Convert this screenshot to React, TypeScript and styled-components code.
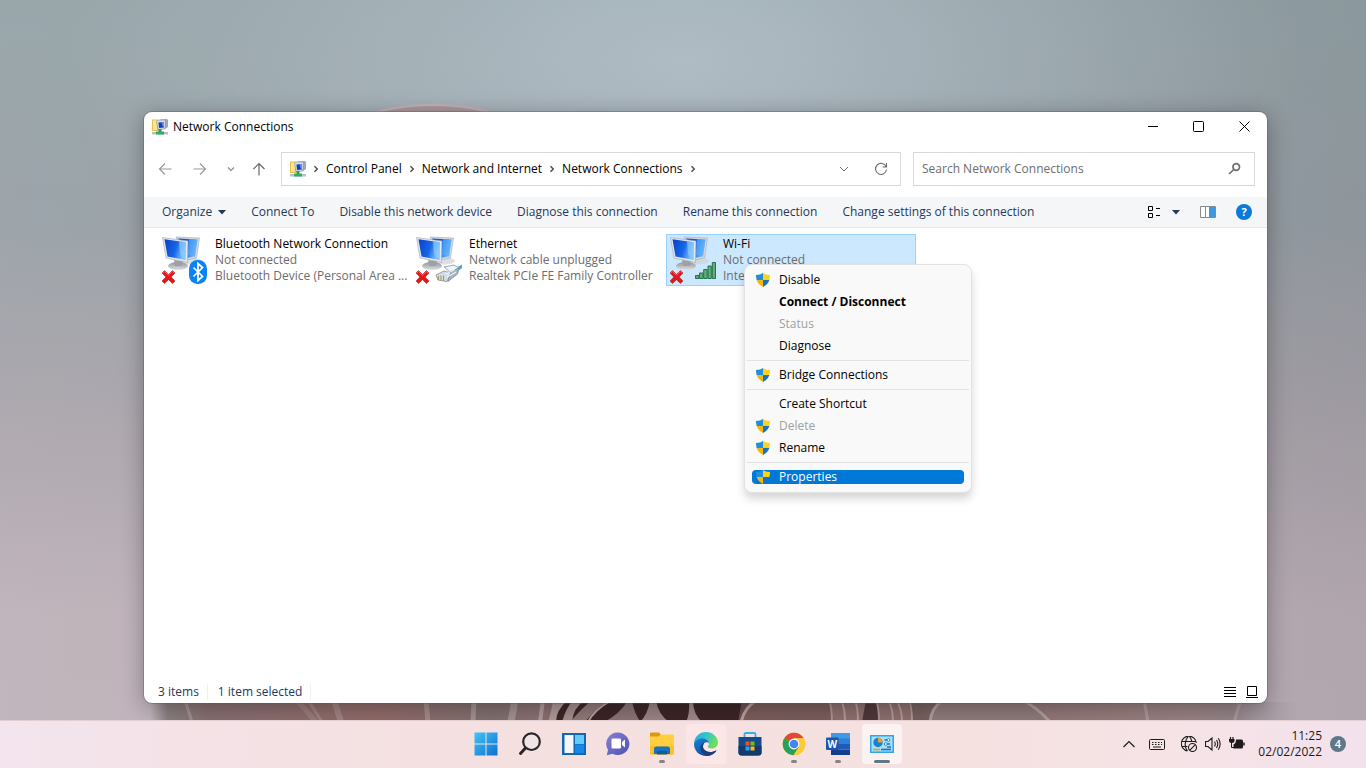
import React from "react";
import styled, { createGlobalStyle } from "styled-components";

const Global = createGlobalStyle`
  *, *::before, *::after { box-sizing: border-box; }
  body { margin: 0; font: 12px/16px "Open Sans", "Noto Sans", sans-serif; color: #000; }
  button { font: inherit; color: inherit; background: none; border: 0; padding: 0; margin: 0; text-align: left; }
  a { color: inherit; text-decoration: none; }
  ul { list-style: none; margin: 0; padding: 0; }
  svg { display: block; flex: none; }
`;

const Desktop = styled.div`
  position: relative;
  min-height: 100vh;
  display: flex;
  flex-direction: column;
  overflow: hidden;
  background:
    radial-gradient(ellipse 620px 300px at 50% 8%, rgba(184, 197, 206, 0.75), rgba(184, 197, 206, 0)),
    linear-gradient(90deg, rgba(255, 255, 255, 0.06), rgba(255, 255, 255, 0) 50%, rgba(70, 70, 80, 0.1)),
    linear-gradient(180deg, #93a2a6 0, #979fa5 30%, #aaa4ab 55%, #bdb0b8 80%, #bdb1b8 100%);
`;

const Wallpaper = styled.svg`
  position: absolute;
  inset: 0;
  width: 100%;
  height: 100%;
`;

const Workspace = styled.main`
  position: relative;
  flex: 1;
  display: flex;
  padding: 112px 99px 17px 144px;
`;

const Window = styled.section`
  flex: 1;
  min-width: 0;
  display: flex;
  flex-direction: column;
  background: #fff;
  border-radius: 8px;
  box-shadow: 0 0 0 1px rgba(90, 90, 95, 0.4), 0 4px 22px rgba(20, 15, 20, 0.36);
`;

const TitleBar = styled.header`
  display: flex;
  align-items: center;
  height: 30px;
  padding-left: 8px;
  gap: 5px;
`;

const Title = styled.h1`
  flex: 1;
  margin: 0;
  font-size: 12px;
  font-weight: 400;
`;

const CaptionButtons = styled.div`
  display: flex;
  align-self: flex-start;
`;

const CaptionButton = styled.button`
  width: 46px;
  height: 28px;
  display: flex;
  align-items: center;
  justify-content: center;
`;

const NavRow = styled.div`
  display: flex;
  align-items: center;
  height: 55px;
  padding: 0 12px 2px 6px;
`;

const NavButton = styled.button<{ $w: number }>`
  width: ${(p) => p.$w}px;
  height: 30px;
  display: flex;
  align-items: center;
  justify-content: center;
`;

const AddressBar = styled.nav`
  flex: 1;
  height: 34px;
  margin: 0 12px 0 4px;
  padding: 0 1px 0 8px;
  border: 1px solid #d9d9d9;
  display: flex;
  align-items: center;
`;

const Crumb = styled.a`
  white-space: nowrap;
`;

const CrumbArrow = styled.svg`
  margin: 0 4px;
`;

const Spacer = styled.div`
  flex: 1;
`;

const SearchBox = styled.label`
  width: 342px;
  height: 34px;
  padding: 0 12px 0 8px;
  border: 1px solid #d9d9d9;
  display: flex;
  align-items: center;
`;

const SearchInput = styled.input`
  flex: 1;
  min-width: 0;
  border: 0;
  padding: 0;
  outline: 0;
  background: none;
  font: inherit;
  &::placeholder { color: #6d6d6d; opacity: 1; }
`;

const CommandBar = styled.div`
  display: flex;
  align-items: center;
  height: 31px;
  padding: 0 15px 0 18px;
  gap: 25px;
  background: #f5f6f8;
  border-bottom: 1px solid #e6e7ea;
  color: #1e395b;
`;

const Command = styled.button`
  display: flex;
  align-items: center;
  gap: 6px;
  white-space: nowrap;
`;

const ViewTools = styled.div<{ $gap: number }>`
  display: flex;
  align-items: center;
  gap: ${(p) => p.$gap}px;
`;

const HelpButton = styled.button`
  width: 16px;
  height: 16px;
  border-radius: 50%;
  background: #0a7bd8;
  color: #fff;
  font-size: 11px;
  font-weight: 700;
  line-height: 16px;
  text-align: center;
`;

const Items = styled.ul`
  flex: 1;
  display: flex;
  align-items: flex-start;
  gap: 4px;
  padding: 6px 14px;
`;

const Item = styled.li`
  position: relative;
  width: 250px;
`;

const Tile = styled.button<{ $selected?: boolean }>`
  width: 100%;
  height: 52px;
  display: flex;
  align-items: center;
  gap: 7px;
  padding-left: 1px;
  border: 1px solid ${(p) => (p.$selected ? "#99d1ff" : "transparent")};
  background: ${(p) => (p.$selected ? "#cce8ff" : "transparent")};
`;

const TileText = styled.span`
  display: flex;
  flex-direction: column;
`;

const TileLine = styled.span<{ $main?: boolean }>`
  color: ${(p) => (p.$main ? "#000" : "#6d6d6d")};
  white-space: nowrap;
`;

const Menu = styled.div`
  position: absolute;
  z-index: 2;
  left: 78px;
  top: 30px;
  width: 228px;
  padding: 4px 2px;
  background: #f9f9f9;
  border: 1px solid #e2e2e2;
  border-radius: 8px;
  box-shadow: 0 6px 9px rgba(0, 0, 0, 0.16);
`;

const MenuRow = styled.button<{ $bold?: boolean }>`
  width: 100%;
  height: 22px;
  padding: 0 5px;
  display: flex;
  align-items: center;
  font-weight: ${(p) => (p.$bold ? 700 : 400)};
  &:disabled { color: #a0a0a0; }
`;

const MenuLabel = styled.span<{ $hot?: boolean }>`
  flex: 1;
  height: 14px;
  line-height: 14px;
  padding-left: 4px;
  display: flex;
  align-items: center;
  gap: 9px;
  border-radius: 4px;
  color: ${(p) => (p.$hot ? "#fff" : "inherit")};
  background: ${(p) => (p.$hot ? "#0078d7" : "transparent")};
`;

const IconSlot = styled.span`
  width: 14px;
  height: 14px;
`;

const Divider = styled.hr`
  height: 1px;
  margin: 3px 0;
  border: 0;
  background: #e2e2e2;
`;

const StatusBar = styled.footer`
  display: flex;
  align-items: center;
  height: 23px;
  padding: 0 9px 0 14px;
  gap: 10px;
  color: #1e395b;
`;

const StatusText = styled.span`
  padding-right: 8px;
  border-right: 1px solid #f0f0f0;
`;

const Taskbar = styled.footer`
  position: relative;
  display: grid;
  grid-template-columns: 1fr auto 1fr;
  align-items: center;
  height: 48px;
  box-shadow: inset 0 1px #e3cfd1;
  background: linear-gradient(90deg, #f3e5ee 0, #f4e2e6 14%, #f4e0df 40%, #f5e1e0 70%, #f5e3e6 86%, #f3e2ec 100%);
`;

const Apps = styled.div`
  grid-column: 2;
  display: flex;
  gap: 4px;
  padding-left: 1px;
`;

const AppButton = styled.button<{ $fill?: string }>`
  position: relative;
  width: 40px;
  height: 40px;
  display: flex;
  align-items: center;
  justify-content: center;
  border-radius: 4px;
  background: ${(p) => p.$fill ?? "transparent"};
`;

const Running = styled.span<{ $active?: boolean }>`
  position: absolute;
  bottom: 1px;
  left: 50%;
  transform: translateX(-50%);
  width: ${(p) => (p.$active ? 16 : 6)}px;
  height: 3px;
  border-radius: 2px;
  background: ${(p) => (p.$active ? "#5f7886" : "#8b8283")};
`;

const Tray = styled.div`
  justify-self: end;
  display: flex;
  align-items: center;
  gap: 8px;
  padding-right: 20px;
  color: #1b1b1b;
`;

const TrayButton = styled.button<{ $gap?: number }>`
  margin-right: ${(p) => p.$gap ?? 0}px;
`;

const Clock = styled.button`
  margin-left: 5px;
  text-align: right;
`;

const Badge = styled.span`
  width: 16px;
  height: 16px;
  border-radius: 50%;
  background: #5f7886;
  color: #fff;
  font-size: 11px;
  font-weight: 600;
  line-height: 16px;
  text-align: center;
`;

/* ---------- wallpaper ---------- */

const ridges: [number, number, number, number][] = [
  [185, 192, 3, 0.4], [297, 316, 5, 0.22], [308, 322, 3, 0.3], [334, 341, 6, 0.3], [426, 428, 5, 0.4],
  [474, 473, 5, 0.45], [515, 511, 7, 0.45], [543, 540, 4, 0.6], [555, 550, 3, 0.6],
];
const pleats: [number, number][] = [[829, 832], [841, 845], [855, 858], [876, 879], [888, 893], [896, 902], [909, 912]];

const Bloom = () => (
  <Wallpaper viewBox="0 0 1366 768" preserveAspectRatio="none" aria-hidden="true">
    <defs>
      <linearGradient id="bloom" x1="150" x2="1300" y1="0" y2="0" gradientUnits="userSpaceOnUse">
        <stop offset="0" stopColor="#8f8587" stopOpacity="0" />
        <stop offset=".015" stopColor="#8b8080" />
        <stop offset=".05" stopColor="#876f6e" />
        <stop offset=".2" stopColor="#916b69" />
        <stop offset=".3" stopColor="#80706f" />
        <stop offset=".34" stopColor="#8c7070" />
        <stop offset=".5" stopColor="#6b4e4d" />
        <stop offset=".67" stopColor="#76605f" />
        <stop offset=".78" stopColor="#927876" />
        <stop offset=".9" stopColor="#9a8280" />
        <stop offset=".94" stopColor="#938487" />
        <stop offset="1" stopColor="#9d949d" stopOpacity="0" />
      </linearGradient>
    </defs>
    <ellipse cx="433" cy="146" rx="104" ry="42" fill="#c2b0b7" />
    <ellipse cx="433" cy="148" rx="98" ry="42" fill="#ab999c" />
    <path d="M150 702H1300V730H150Z" fill="url(#bloom)" />
    {ridges.map(([a, b, w, o]) => (
      <path key={a} d={`M${a} 700L${b} 722`} stroke="#cbb9b8" strokeWidth={w} opacity={o} />
    ))}
    <path d="M565 700H700L742 700L738 722H548Z" fill="#3b2526" />
    <path d="M568 700Q556 710 556 722H548Q552 708 559 700Z" fill="#b09896" />
    <path d="M585 700Q573 708 572 722H562Q566 708 573 700Z" fill="#a58d8b" />
    <path d="M612 700Q594 710 585 722H570Q582 708 592 700Z" fill="#927877" />
    <path d="M612 700Q594 710 588 722" stroke="#bba5a3" strokeWidth="2" fill="none" />
    <path d="M632 700Q634 714 641 722H604Q620 714 628 700Z" fill="#8b7473" />
    <path d="M656 700Q658 714 669 722H640Q648 714 650 700Z" fill="#9a8583" />
    <path d="M693 700Q693 714 702 722H686Q690 714 689 700Z" fill="#a08b89" />
    <path d="M758 700Q745 706 740 722H836L828 700Z" fill="#7a5e5c" />
    <path d="M758 700Q745 706 741 722" stroke="#b8a29f" strokeWidth="3" fill="none" />
    <path d="M830 700H908L912 722H834Z" fill="#8d706d" />
    <path d="M866 700H876L880 722H862Z" fill="#4e3838" />
    {pleats.map(([a, b]) => (
      <path key={a} d={`M${a} 700Q${b} 708 ${b} 722`} stroke="#c2aaa6" strokeWidth="2" opacity=".75" fill="none" />
    ))}
    <path d="M941 700Q931 708 930 722H1050Q1040 706 1020 700Z" fill="#8e7b7b" />
    <path d="M943 700Q931 708 930 722M1022 700Q1038 708 1050 722" stroke="#bca9a8" strokeWidth="3" opacity=".8" fill="none" />
    <path d="M1144 700L1148 722M1241 700L1234 722" stroke="#b5a3a2" strokeWidth="3" opacity=".7" />
  </Wallpaper>
);

/* ---------- small line icons ---------- */

type LineProps = { d: string; w?: number; h?: number; color?: string; sw?: number };
const Line = ({ d, w = 16, h = 16, color = "#7a7a7a", sw = 1 }: LineProps) => (
  <svg width={w} height={h} viewBox={`0 0 ${w} ${h}`} fill="none" stroke={color} strokeWidth={sw} aria-hidden="true">
    <path d={d} />
  </svg>
);

const Arrow = () => (
  <CrumbArrow width="12" height="12" viewBox="0 0 12 12" fill="none" stroke="#4a4a4a" strokeWidth="1.4" aria-hidden="true">
    <path d="M4.5 3.2L7.3 6L4.5 8.8" />
  </CrumbArrow>
);

const Caret = () => (
  <svg width="8" height="5" viewBox="0 0 8 5" aria-hidden="true"><path d="M0 0H8L4 4.5Z" fill="#1e395b" /></svg>
);

const NetFolder = () => (
  <svg width="16" height="16" viewBox="0 0 16 16" aria-hidden="true">
    <path d="M0 .500H5.500L6.500 1.500V12H0Z" fill="#e8c04e" />
    <path d="M1 1.500H5V11H1Z" fill="#fbe48e" />
    <path d="M8 .500L15 0L16 1V8L13 10Z" fill="#9da7ba" />
    <path d="M4.500 2.500L6 1H13.500L13 10L6 10.500Z" fill="#d6dbe5" stroke="#7f8ba3" strokeWidth=".6" />
    <path d="M6.500 3.500L12 3V8.500L7 9Z" fill="#173fb8" />
    <path d="M9.500 3.200L12 3V8.500L10.500 7Z" fill="#5a97f2" />
    <path d="M6.500 10H9.500V13H6.500Z" fill="#2a9d58" />
    <path d="M0 13H16V15.500H0Z" fill="#b9c0c6" />
    <path d="M4 12.500H12V15.500H4Z" fill="#2fae63" />
  </svg>
);

const Shield = () => (
  <svg width="14" height="14" viewBox="0 0 14 14" aria-hidden="true">
    <defs><clipPath id="shield"><path d="M7 0Q9.500 1.800 14 2Q14.300 10.500 7 14Q-.3 10.500 0 2Q4.500 1.800 7 0Z" /></clipPath></defs>
    <g clipPath="url(#shield)">
      <path d="M0 0H7V7H0Z" fill="#1d8fdd" />
      <path d="M7 0H14V7H7Z" fill="#ffd21a" />
      <path d="M0 7H7V14H0Z" fill="#f6b60d" />
      <path d="M7 7H14V14H7Z" fill="#1673c4" />
    </g>
  </svg>
);

/* ---------- connection icons ---------- */

const Monitors = ({ children }: { children: React.ReactNode }) => (
  <svg width="48" height="48" viewBox="0 0 48 48" aria-hidden="true">
    <defs>
      <linearGradient id="scr" x1="0" y1="0" x2="1" y2="0.3">
        <stop offset="0" stopColor="#0a3fc4" /><stop offset=".6" stopColor="#1667e8" /><stop offset="1" stopColor="#7cc2ff" />
      </linearGradient>
      <linearGradient id="stand" x1="0" y1="0" x2="0" y2="1">
        <stop offset="0" stopColor="#8f9299" /><stop offset="1" stopColor="#dfe1e4" />
      </linearGradient>
    </defs>
    <ellipse cx="30" cy="25" rx="11" ry="3.500" fill="#cfd1d5" opacity=".7" />
    <path d="M16 1L39.500 2L36.500 22L26 24Z" fill="#d5d9df" stroke="#a4a9b1" strokeWidth=".6" />
    <path d="M18 2.500L37.500 3.500L35 20.500L26 22Z" fill="url(#scr)" />
    <path d="M29 3L37.500 3.500L35 20.500L28 19Z" fill="#58acfa" opacity=".7" />
    <ellipse cx="18" cy="30" rx="10" ry="4" fill="url(#stand)" />
    <path d="M14 24L23 25L22 30H15Z" fill="#9da0a6" />
    <path d="M2.500 1.500L28 5L27.500 26.500L6 22Z" fill="#e4e7eb" stroke="#9fa5ae" strokeWidth=".6" />
    <path d="M4.500 3.300L26 6.300L25.500 24L7.500 20.500Z" fill="url(#scr)" />
    <path d="M19 5.300L26 6.300L25.500 24L20 18Z" fill="#8fccff" opacity=".65" />
    {children}
    <path d="M2 37L4.500 34.500L8.500 38.500L12.500 34.500L15 37L11.200 41L15 45L12.500 47.500L8.500 43.700L4.500 47.500L2 45L5.800 41Z" fill="#e0171b" stroke="#b01013" strokeWidth=".5" strokeLinejoin="round" />
    <path d="M3 37L4.500 35.500L8.500 39.500L12.500 35.500L14 37" fill="none" stroke="#f56b6b" strokeWidth=".8" />
  </svg>
);

const BluetoothMark = () => (
  <>
    <rect x="29" y="24" width="18" height="24" rx="8.500" fill="#0a84f5" />
    <path d="M33.500 31.500L42.500 40.500L38 44.500V27.500L42.500 31.500L33.500 40.500" fill="none" stroke="#fff" strokeWidth="1.700" />
  </>
);

const PlugMark = () => (
  <>
    <path d="M40 33L48 28.500L49 31.500L42 36Z" fill="#4aa6e0" />
    <path d="M30 31L40 29L45 32L36 36Z" fill="#eef3f7" stroke="#8694a1" strokeWidth=".8" />
    <path d="M36 36L45 32L43.500 38L34 45.500Z" fill="#a6b6c3" stroke="#7b8c9b" strokeWidth=".8" />
    <path d="M22 39L30 35L37 37L33 45.500L24 44Z" fill="#d3dde4" stroke="#7b8c9b" strokeWidth=".8" />
    <path d="M24.500 40V44M27 39.500V44.500M29.500 39.500V45" stroke="#a99554" strokeWidth="1" />
    <path d="M32 38L41 33.500M33 41L42 36" stroke="#fff" strokeWidth="1" />
  </>
);

const SignalMark = () => (
  <g fill="#5fae7c" stroke="#27714a" strokeWidth="1">
    <path d="M27.500 39.500H31V42.500H27.500Z" />
    <path d="M31.500 37H35V42.500H31.500Z" />
    <path d="M35.700 33.500H39.200V42.500H35.700Z" />
    <path d="M40 30H43.300V42.500H40Z" />
    <path d="M44.300 26.500H47.500V42.500H44.300Z" />
  </g>
);

/* ---------- taskbar icons ---------- */

const Svg24 = ({ children }: { children: React.ReactNode }) => (
  <svg width="24" height="24" viewBox="0 0 24 24" aria-hidden="true">{children}</svg>
);

const StartIcon = () => (
  <Svg24>
    <defs><linearGradient id="win" x1="0" y1="0" x2="24" y2="24" gradientUnits="userSpaceOnUse"><stop stopColor="#43c6f8" /><stop offset="1" stopColor="#0a6fd0" /></linearGradient></defs>
    <path d="M.500 .500H11.500V11.500H.500ZM12.500 .500H23.500V11.500H12.500ZM.500 12.500H11.500V23.500H.500ZM12.500 12.500H23.500V23.500H12.500Z" fill="url(#win)" />
  </Svg24>
);
const SearchIcon = () => (
  <Svg24>
    <circle cx="13.500" cy="9.700" r="8.300" fill="#efe4e6" stroke="#2a2526" strokeWidth="2.200" />
    <path d="M7.500 16L2.500 21.500" stroke="#2a2526" strokeWidth="3" strokeLinecap="round" />
  </Svg24>
);
const WidgetsIcon = () => (
  <Svg24>
    <path d="M0 1H24V23H0Z" fill="#1267b5" />
    <path d="M2.500 3H11.500V21H2.500Z" fill="#f4f6f9" />
    <path d="M13 3H22V12H13Z" fill="#62cbfb" />
    <path d="M13 12.500H22V21H13Z" fill="#1688e8" />
  </Svg24>
);
const ChatIcon = () => (
  <Svg24>
    <defs><linearGradient id="chat" x1="0" y1="0" x2="1" y2="1"><stop stopColor="#8a80cf" /><stop offset="1" stopColor="#4a52b8" /></linearGradient></defs>
    <path d="M12 .5A11.500 11.300 0 1 1 6.500 21.800L.8 23.200L2 17.800A11.500 11.300 0 0 1 12 .5Z" fill="url(#chat)" />
    <rect x="5.500" y="6.500" width="9.500" height="10" rx="1.200" fill="#fff" />
    <path d="M16 10L19 7.500V15.500L16 13Z" fill="#fff" />
  </Svg24>
);
const FilesIcon = () => (
  <Svg24>
    <path d="M0 1.500Q0 .5 1 .5H9L11 3V6H0Z" fill="#d99a0b" />
    <path d="M0 4.500H8.500L11 2.500H23Q24 2.500 24 3.500V21.500Q24 22.500 23 22.500H1Q0 22.500 0 21.500Z" fill="#ffcf3f" />
    <path d="M0 14H24V21.500Q24 22.500 23 22.500H1Q0 22.500 0 21.500Z" fill="#fbc02b" />
    <path d="M4 22V17Q4 14.500 6.500 14.500H17.500Q20 14.500 20 17V22Z" fill="#1673c2" />
    <path d="M7 19H17V22.500H7Z" fill="#0e5b9f" />
  </Svg24>
);
const EdgeIcon = () => (
  <Svg24>
    <defs>
      <linearGradient id="edgeTop" x1="0" y1="0" x2="1" y2=".4"><stop stopColor="#2aa8dd" /><stop offset=".5" stopColor="#30c3cf" /><stop offset="1" stopColor="#6be05c" /></linearGradient>
      <linearGradient id="edgeLow" x1="0" y1="0" x2=".6" y2="1"><stop stopColor="#1782d5" /><stop offset="1" stopColor="#0e4f9e" /></linearGradient>
    </defs>
    <path d="M0 11.500C.500 4.500 5.500 0 12 0S24 5 24 10.500C24 14 21.500 16.500 18 16.500C15.500 16.500 13.800 15.800 13.800 14.800C13.800 14 15 13.500 15 11.500C15 9 12.500 7 9 7C5 7 1 8.500 0 11.500Z" fill="url(#edgeTop)" />
    <path d="M0 12C0 9 4 6.500 8.500 6.500C12.500 6.500 15 9 15 11.500C14 9.800 9.500 9.500 9 14C8.700 18 13 21.500 19.500 19.500C21 19 22.300 18.200 22.500 18.500C20.500 22 16.500 24 12 24C5.500 24 0 19 0 12Z" fill="url(#edgeLow)" />
    <path d="M7.500 12.500C4.500 17 8 23 14 23.700C17.500 23.300 21 21.500 22.500 18.500C22 18.300 21 19.200 19 19.700C13 21 8.500 17.500 9 14C9.200 12 10 11 11 10.500Q8.500 10.800 7.500 12.500Z" fill="#1b3f78" />
  </Svg24>
);
const StoreIcon = () => (
  <Svg24>
    <path d="M6.500 6V2.500Q6.500 1 8 1H16Q17.500 1 17.500 2.500V6" fill="none" stroke="#30b0ec" strokeWidth="1.800" />
    <path d="M.500 5H23.500V20.500Q23.500 23.500 20.500 23.500H3.500Q.500 23.500 .500 20.500Z" fill="#174b88" />
    <path d="M.500 14H23.500V20.500Q23.500 23.500 20.500 23.500H3.500Q.500 23.500 .500 20.500Z" fill="#123a6e" />
    <path d="M7.500 9.500H11.500V13.500H7.500Z" fill="#f0512a" /><path d="M12.500 9.500H16.500V13.500H12.500Z" fill="#7dba1c" />
    <path d="M7.500 14.500H11.500V18.500H7.500Z" fill="#23a5ec" /><path d="M12.500 14.500H16.500V18.500H12.500Z" fill="#fdb813" />
  </Svg24>
);
const ChromeIcon = () => (
  <Svg24>
    <circle cx="12" cy="12" r="11.300" fill="#fbc833" />
    <path d="M12 12L2.200 6.350A11.300 11.300 0 0 1 21.800 6.350H12Z" fill="#e0483c" />
    <path d="M12 12L2.200 6.350A11.300 11.300 0 0 0 11.500 23.300L17 14.900Z" fill="#25a15a" />
    <path d="M12 6.350H21.800A11.300 11.300 0 0 1 11.500 23.300L17 14.900Z" fill="#fbcb3c" />
    <circle cx="12" cy="12" r="5.400" fill="#fff" />
    <circle cx="12" cy="12" r="4.300" fill="#4285f4" />
  </Svg24>
);
const WordMark = styled.text`
  font: 700 10px "Open Sans", sans-serif;
  fill: #fff;
`;
const WordIcon = () => (
  <Svg24>
    <path d="M5 1H24V7H5Z" fill="#3f9be8" /><path d="M5 6.500H24V12H5Z" fill="#2f7fd6" />
    <path d="M5 12H24V17.500H5Z" fill="#1f5cba" /><path d="M5 17.500H24V23H5Z" fill="#153f8e" />
    <rect x="0" y="5.500" width="12.500" height="12.500" rx="1" fill="#1a55b0" />
    <WordMark x="6.300" y="15.500" textAnchor="middle">W</WordMark>
  </Svg24>
);
const ControlPanelIcon = () => (
  <Svg24>
    <path d="M0 3H24V21H0Z" fill="#36a4e3" />
    <path d="M1.500 4.500H22.500V19.500H1.500Z" fill="#a2e0fb" />
    <circle cx="8" cy="10.500" r="4.700" fill="#1782cf" />
    <path d="M8 10.500V5.800A4.700 4.700 0 0 1 12.700 10.500Z" fill="#f59b23" />
    <path d="M14.500 8H20M14.500 12H20M17 15H21" stroke="#1974c2" strokeWidth="1.300" />
    <circle cx="18.500" cy="8" r="1.400" fill="#fff" stroke="#1974c2" strokeWidth=".8" /><circle cx="15.800" cy="12" r="1.400" fill="#fff" stroke="#1974c2" strokeWidth=".8" />
    <path d="M3 17.500H10" stroke="#f59b23" strokeWidth="1.600" /><path d="M11 17.500H21" stroke="#1974c2" strokeWidth="1.600" />
  </Svg24>
);

/* ---------- data ---------- */

const crumbs = ["Control Panel", "Network and Internet", "Network Connections"];
const commands = ["Connect To", "Disable this network device", "Diagnose this connection", "Rename this connection", "Change settings of this connection"];

type MenuEntry = { label: string; shield?: boolean; bold?: boolean; disabled?: boolean; hot?: boolean } | null;
const menu: MenuEntry[] = [
  { label: "Disable", shield: true },
  { label: "Connect / Disconnect", bold: true },
  { label: "Status", disabled: true },
  { label: "Diagnose" },
  null,
  { label: "Bridge Connections", shield: true },
  null,
  { label: "Create Shortcut" },
  { label: "Delete", shield: true, disabled: true },
  { label: "Rename", shield: true },
  null,
  { label: "Properties", shield: true, hot: true },
];

const connections = [
  { name: "Bluetooth Network Connection", state: "Not connected", device: "Bluetooth Device (Personal Area ...", mark: <BluetoothMark /> },
  { name: "Ethernet", state: "Network cable unplugged", device: "Realtek PCIe FE Family Controller", mark: <PlugMark /> },
  { name: "Wi-Fi", state: "Not connected", device: "Intel", mark: <SignalMark />, selected: true },
];

const apps = [
  { name: "Start", icon: <StartIcon /> },
  { name: "Search", icon: <SearchIcon /> },
  { name: "Widgets", icon: <WidgetsIcon /> },
  { name: "Chat", icon: <ChatIcon /> },
  { name: "File Explorer", icon: <FilesIcon />, running: true },
  { name: "Microsoft Edge", icon: <EdgeIcon />, fill: "#fde6e8" },
  { name: "Microsoft Store", icon: <StoreIcon /> },
  { name: "Google Chrome", icon: <ChromeIcon />, running: true },
  { name: "Word", icon: <WordIcon />, running: true },
  { name: "Control Panel", icon: <ControlPanelIcon />, running: true, active: true, fill: "#fbf2f2" },
];

const ContextMenu = () => (
  <Menu role="menu">
    {menu.map((m, i) =>
      m ? (
        <MenuRow key={m.label} role="menuitem" $bold={m.bold} disabled={m.disabled}>
          <MenuLabel $hot={m.hot}>
            <IconSlot>{m.shield && <Shield />}</IconSlot>
            {m.label}
          </MenuLabel>
        </MenuRow>
      ) : (
        <Divider key={i} />
      )
    )}
  </Menu>
);

export default function App() {
  return (
    <Desktop>
      <Global />
      <Bloom />
      <Workspace>
        <Window>
          <TitleBar>
            <NetFolder />
            <Title>Network Connections</Title>
            <CaptionButtons>
              <CaptionButton aria-label="Minimize"><Line w={11} h={11} color="#000" d="M1 5.500H11" /></CaptionButton>
              <CaptionButton aria-label="Maximize"><Line w={11} h={11} color="#000" d="M1.500 .500H9.500Q10.500 .500 10.500 1.500V9.500Q10.500 10.500 9.500 10.500H1.500Q.500 10.500 .500 9.500V1.500Q.500 .500 1.500 .500Z" /></CaptionButton>
              <CaptionButton aria-label="Close"><Line w={11} h={11} color="#000" d="M.500 .500L10.500 10.500M10.500 .500L.500 10.500" /></CaptionButton>
            </CaptionButtons>
          </TitleBar>
          <NavRow>
            <NavButton $w={30} aria-label="Back"><Line color="#9a9a9a" d="M14.500 8H2.500M8 2.500L2.500 8L8 13.500" sw={1.2} /></NavButton>
            <NavButton $w={40} aria-label="Forward"><Line color="#9a9a9a" d="M1.500 8H13.500M8 2.500L13.500 8L8 13.500" sw={1.2} /></NavButton>
            <NavButton $w={21} aria-label="Recent locations"><Line w={8} h={8} color="#8a8a8a" d="M1 2.500L4 5.500L7 2.500" sw={1.2} /></NavButton>
            <NavButton $w={36} aria-label="Up"><Line color="#666" d="M8 14.500V2.500M2.500 8L8 2.500L13.500 8" sw={1.2} /></NavButton>
            <AddressBar aria-label="Address">
              <NetFolder />
              <Arrow />
              {crumbs.map((c) => (
                <React.Fragment key={c}>
                  <Crumb href="#">{c}</Crumb>
                  <Arrow />
                </React.Fragment>
              ))}
              <Spacer />
              <NavButton $w={37} aria-label="Previous locations"><Line w={10} h={10} color="#6d6d6d" d="M1 3L5 7L9 3" /></NavButton>
              <NavButton $w={37} aria-label="Refresh"><Line w={14} h={14} color="#6d6d6d" d="M12.200 5A5.500 5.500 0 1 0 12.500 7.500M12.500 1V5H8.700" sw={1.1} /></NavButton>
            </AddressBar>
            <SearchBox>
              <SearchInput type="search" placeholder="Search Network Connections" aria-label="Search Network Connections" />
              <Line w={15} h={15} color="#6d6d6d" d="M12.500 6A3.300 3.300 0 1 1 5.900 6A3.300 3.300 0 1 1 12.500 6ZM6.800 8.500L2 13" sw={1.7} />
            </SearchBox>
          </NavRow>
          <CommandBar>
            <Command>Organize <Caret /></Command>
            {commands.map((c) => <Command key={c}>{c}</Command>)}
            <Spacer />
            <ViewTools $gap={20}>
              <ViewTools $gap={11}>
                <Command aria-label="Change your view">
                  <Line w={13} h={12} color="#000" d="M.500 .500H4.500V4.500H.500ZM.500 7.500H4.500V11.500H.500ZM8 2.500H12M8 9.500H12" />
                </Command>
                <Command aria-label="More view options"><Caret /></Command>
              </ViewTools>
              <Command aria-label="Show the preview pane">
                <svg width="16" height="12" viewBox="0 0 16 12" aria-hidden="true">
                  <path d="M.500 .500H15.500V11.500H.500Z" fill="#fff" stroke="#858a90" />
                  <path d="M5.500 1V11" stroke="#858a90" />
                  <path d="M9 1H15V11H9Z" fill="#3c97e0" />
                </svg>
              </Command>
              <HelpButton aria-label="Get help">?</HelpButton>
            </ViewTools>
          </CommandBar>
          <Items>
            {connections.map((c) => (
              <Item key={c.name}>
                <Tile $selected={c.selected}>
                  <Monitors>{c.mark}</Monitors>
                  <TileText>
                    <TileLine $main>{c.name}</TileLine>
                    <TileLine>{c.state}</TileLine>
                    <TileLine>{c.device}</TileLine>
                  </TileText>
                </Tile>
                {c.selected && <ContextMenu />}
              </Item>
            ))}
          </Items>
          <StatusBar>
            <StatusText>3 items</StatusText>
            <StatusText>1 item selected</StatusText>
            <Spacer />
            <button aria-label="Details view"><Line w={12} h={12} color="#000" d="M0 1.500H12M0 4.500H12M0 7.500H12M0 10.500H12" /></button>
            <button aria-label="Large icons view"><Line w={12} h={12} color="#000" d="M1.500 .500H10.500V9.500H1.500ZM0 11.500H12" /></button>
          </StatusBar>
        </Window>
      </Workspace>
      <Taskbar>
        <Apps>
          {apps.map((a) => (
            <AppButton key={a.name} aria-label={a.name} $fill={a.fill}>
              {a.icon}
              {a.running && <Running $active={a.active} />}
            </AppButton>
          ))}
        </Apps>
        <Tray>
          <TrayButton aria-label="Show hidden icons" $gap={6}><Line w={12} h={12} color="#1b1b1b" d="M.500 9L6 3.500L11.500 9" sw={1.2} /></TrayButton>
          <TrayButton aria-label="Touch keyboard" $gap={8}><Line color="#1b1b1b" d="M1.500 3.500H14.500Q15.500 3.500 15.500 4.500V12.500Q15.500 13.500 14.500 13.500H1.500Q.500 13.500 .500 12.500V4.500Q.500 3.500 1.500 3.500ZM3 6.500H4.500M6 6.500H7.500M9 6.500H10.500M12 6.500H13M3 8.500H4.500M6 8.500H7.500M9 8.500H10.500M12 8.500H13M4 11H12" /></TrayButton>
          <TrayButton aria-label="No internet"><Line color="#1b1b1b" d="M6.500 15A7.500 7.500 0 1 1 15.300 7M.500 5.500H15M.500 10.500H6.500M7 .500Q1.500 8 6.500 15M8.500 .500Q10.500 3 11 6M15.500 11.500A4 4 0 1 1 7.500 11.500A4 4 0 1 1 15.500 11.500ZM8.700 14.300L14.300 8.700" sw={1.1} /></TrayButton>
          <TrayButton aria-label="Volume"><Line color="#1b1b1b" d="M.500 5.500H3L7 2V14L3 10.500H.500ZM9.500 5.500Q11 8 9.500 10.500M11.500 4Q14 8 11.500 12M13.300 2.300Q17 8 13.300 13.700" sw={1.1} /></TrayButton>
          <TrayButton aria-label="Battery charging">
            <svg width="16" height="16" viewBox="0 0 16 16" aria-hidden="true">
              <path d="M1.500 1V3M4 1V3" stroke="#1b1b1b" strokeWidth="1.200" />
              <path d="M0 3H5.500V4.500Q5.500 7 2.750 7Q0 7 0 4.500Z" fill="#1b1b1b" />
              <path d="M2.500 6V11.500H5" fill="none" stroke="#1b1b1b" />
              <path d="M7 3.500H12.500Q14 3.500 14 5V11Q14 12.500 12.500 12.500H4.500V8.500Q7 7.500 7 3.500Z" fill="#1b1b1b" />
              <path d="M15 6.500V9.500" stroke="#1b1b1b" strokeWidth="1.500" />
            </svg>
          </TrayButton>
          <Clock>11:25<br />02/02/2022</Clock>
          <Badge>4</Badge>
        </Tray>
      </Taskbar>
    </Desktop>
  );
}
